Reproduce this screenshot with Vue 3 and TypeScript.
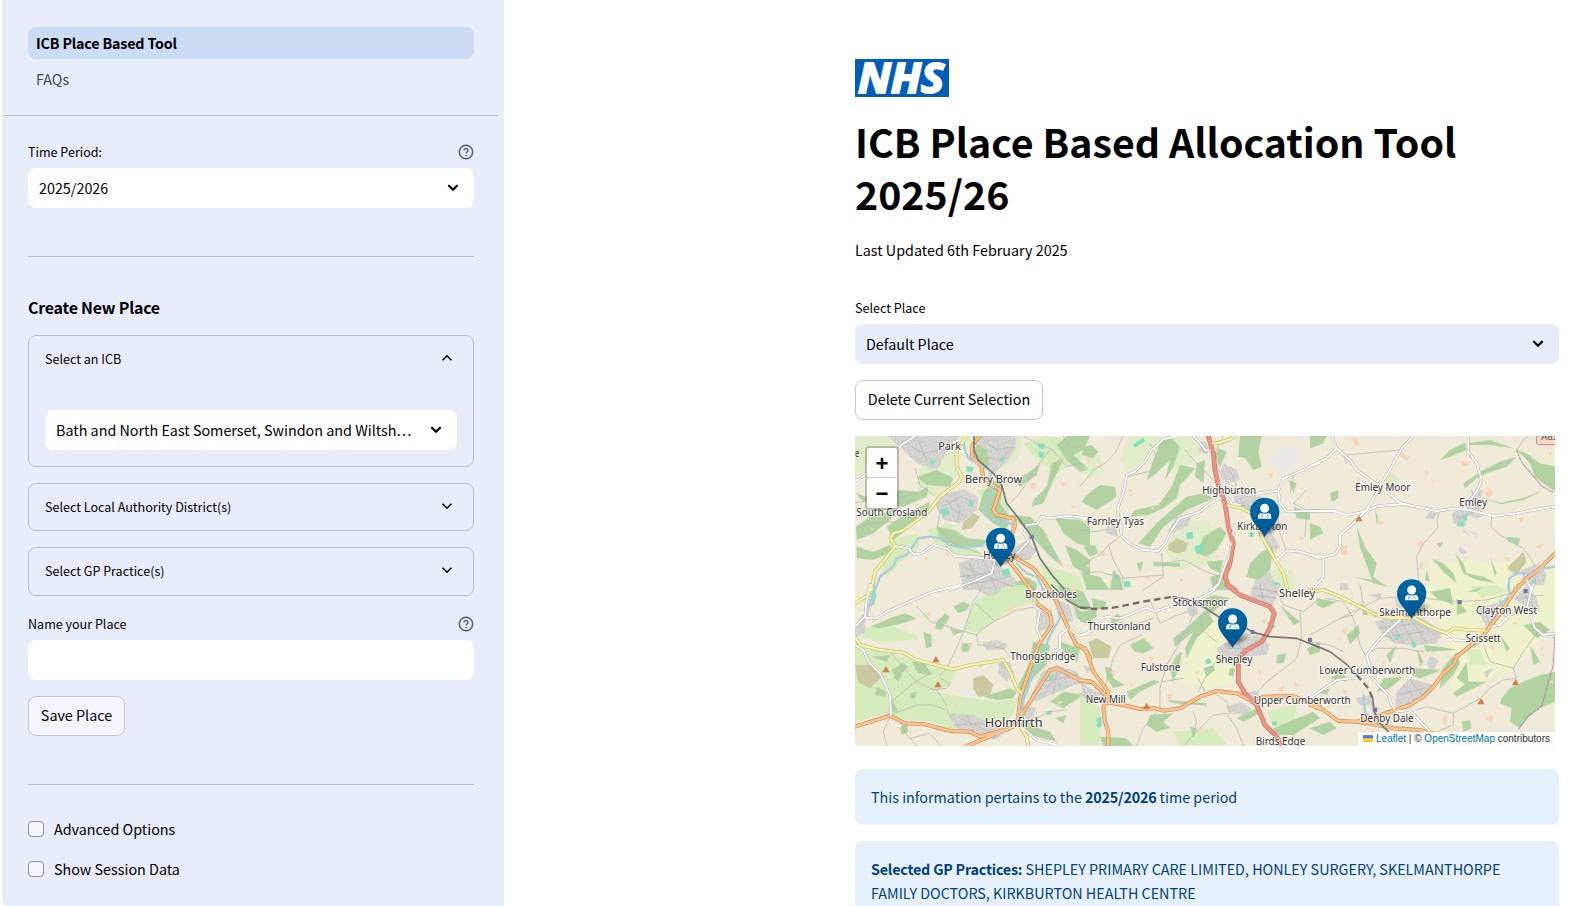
<script setup lang="ts">
import { ref } from 'vue'

type Kind = 'wood' | 'grass' | 'meadow' | 'town' | 'farm' | 'sport' | 'park' | 'heath' | 'pale'
interface Area { k: Kind; d: string }
interface Road { k: 'a' | 'b' | 'm' | 'w' | 'u' | 'river' | 'rail' | 'tunnel'; d: string }
interface Sheet { x: number; y: number; areas: Area[]; roads: Road[] }
interface Label { x: number; y: number; w: number; t: string; s?: number }

const period = ref('2025/2026')
const placeName = ref('')
const advanced = ref(false)
const session = ref(false)

// Map sheets are digitised at three units per pixel, each with its own origin.
const sheets: Sheet[] = [
  {
    x: -15, y: -18,
    areas: [
      { k: 'park', d: 'M15 18H75L60 60L45 120L15 150Z M330 18H520L500 90L440 120L400 110L360 70Z M210 110L310 60L330 130L260 200L200 190Z M60 18H110L150 60L140 110L80 120Z' },
      { k: 'grass', d: 'M520 40L590 18L660 30L700 80L620 130L560 90Z M230 300L300 280L360 330L400 380L340 390L260 350Z M120 330L200 310L210 350L160 390L110 440L90 400Z M380 180L440 170L480 230L470 290L420 260Z M570 400L690 440L700 480H590Z' },
      { k: 'town', d: 'M110 18H330L300 50L260 120L200 100L160 60Z M380 18H500L495 60L470 95L430 135L400 90Z M255 215L290 190L340 178L385 200L380 240L330 280L280 270Z M325 400L400 375L440 400L490 440L520 480H340Z M480 360L530 330L560 360L540 390L500 390Z M560 300L590 310L600 340L570 340Z' },
      { k: 'wood', d: 'M200 140L260 120L310 145L300 170L230 165Z M80 200L150 180L205 185L235 170L230 200L160 230L100 225Z M18 290L60 260L130 240L120 270L70 310L20 330Z M110 290L170 250L240 215L230 250L180 290L130 330Z M260 290L310 300L350 325L410 330L400 350L330 350L270 330Z M430 150L460 170L450 220L480 260L470 300L430 280L385 240L400 190Z M480 255L540 260L580 300L640 410L600 380L530 300Z M605 100L640 85L620 130L580 220L545 230L550 210L590 170Z M620 45L650 18L720 18L700 60L670 75L720 120L690 125L650 90Z M615 265L690 270L720 290V350L680 340L640 310Z M645 345L680 360L720 390V440L670 410Z M20 350L70 365L120 345L125 365L70 390L20 385Z M490 150L540 125L570 100L560 135L510 170Z M380 40L410 60L420 110L395 110L370 80Z M530 440L560 460L560 480H500L495 460Z M18 190L60 205L40 215Z' },
      { k: 'heath', d: 'M340 275L370 250L390 260L365 295L335 300Z' },
      { k: 'sport', d: 'M270 240L290 232L300 250L280 260Z M350 108L372 112L365 128L350 124Z M358 214L372 216L368 232L356 228Z M565 40L585 42L580 58L566 54Z M566 64L584 68L576 84L565 78Z M455 80L465 82L460 96L450 92Z M455 420L475 415L482 432L460 440Z M348 436L360 434L360 446L350 446Z M240 90L256 92L250 104L240 102Z' },
      { k: 'farm', d: 'M540 160L560 158L556 176L545 180Z M630 155L650 158L640 170Z M150 300L165 290L160 308Z M660 225L680 228L668 236Z M220 385L235 380L228 394Z M285 370L300 372L292 382Z M60 292L74 296L64 304Z M190 220L205 222L198 230Z' }
    ],
    roads: [
      { k: 'river', d: 'M340 30L345 60L355 85L380 100L420 120L430 180L405 230L410 260L440 270L480 280L490 290' },
      { k: 'river', d: 'M75 480L90 440L130 410L140 385L170 375L205 325L240 320L270 325L300 345L340 355L400 345' },
      { k: 'river', d: 'M500 400L530 430L560 440L580 480' },
      { k: 'u', d: 'M15 220L60 210L140 205L200 190 M255 215L270 250L262 290L310 340L390 370 M195 115L210 165L250 195 M600 60L560 110L530 160L500 200L470 230 M640 18L655 50L720 50 M15 295L60 280L130 275 M520 18L560 40L610 60L650 110L690 100 M290 210L310 240L350 260 M280 230L330 200L370 215 M310 190L330 250L320 275 M400 30L440 60L490 50 M410 80L450 90L480 60' },
      { k: 'u', d: 'M340 410L410 440L490 470 M360 400L390 480 M400 390L440 480 M330 440L450 425 M350 465L480 440 M150 30L220 70L300 55 M200 20L230 90' },
      { k: 'w', d: 'M15 155L60 125L120 90L155 45L195 18' },
      { k: 'w', d: 'M135 348L175 355L190 372L215 370L250 345L290 355L315 378L400 384L440 375L430 410L425 430L380 450L340 465L300 480' },
      { k: 'w', d: 'M435 368L500 372L535 335L522 310L530 285L560 282L575 260L600 265L650 258L720 265' },
      { k: 'b', d: 'M350 18L320 60L320 110L335 140L325 158L270 200L235 245L160 300L130 310L122 325L135 350L95 400L75 425L65 480' },
      { k: 'a', d: 'M390 18L368 45L365 80L395 110L400 145L450 180L440 210L430 240L440 255L490 265L495 285L480 330L470 370L455 400' },
      { k: 'a', d: 'M475 390L510 435L545 480' },
      { k: 'a', d: 'M470 350L500 385L550 415L580 450L600 480' },
      { k: 'rail', d: 'M372 18V60L385 90L430 130L455 165L470 220L510 270L545 320L570 385L610 440L645 480' }
    ]
  },
  {
    x: 675, y: -18,
    areas: [
      { k: 'park', d: 'M150 18H240L210 80L150 120L120 90Z M270 18H350L370 60L320 110L280 120Z M300 280L380 270L430 330L390 400L300 420L250 360Z M15 100L60 70L70 130L20 150Z M560 420H640V480H570Z' },
      { k: 'town', d: 'M430 100L470 120L480 150L440 160L420 130Z M460 200L510 190L570 210L600 245L530 255L470 235Z M535 255L570 300L600 350L570 380L545 330Z M530 430L570 425L590 480H520Z M290 260L340 250L320 290L275 310L265 300Z M75 300L105 280L115 320L80 310Z M370 30L390 50L380 75L355 60Z' },
      { k: 'pale', d: 'M585 60L640 40L655 80L645 110L605 130L565 95Z' },
      { k: 'wood', d: 'M240 40L270 18L300 50L280 110L255 150L270 90L230 130L200 150L220 90Z M300 105L345 115L320 145L300 165L290 205L250 235L205 255L150 260L165 240L235 225L275 170Z M20 195L60 165L105 170L110 200L65 230L50 240L5 215Z M10 55L35 45L55 65L40 85L5 75Z M350 100L375 90L370 160L345 140Z M480 18H545L535 65L545 110L520 120L495 85L475 80Z M415 55L440 65L420 110L405 80Z M320 200L370 190L400 205L320 240L250 290L210 350L175 340L230 280Z M370 320L420 290L440 310L410 360L380 380L350 370Z M510 400L540 370L580 345L570 420L535 450L500 440Z M10 350L45 345L55 370L30 380Z M100 420L120 440L130 480H90Z M5 430L60 440L90 480H20Z M220 395L300 400L300 410L220 408Z M380 395L430 390L420 430L390 415Z M625 150L650 160L640 190Z M640 230L690 250L690 270L650 265Z M390 440L430 430L450 480H400Z M170 400L190 395L180 430Z' },
      { k: 'heath', d: 'M265 345L290 325L325 340L315 365L290 370L265 360Z' },
      { k: 'sport', d: 'M158 45L190 22L195 35L165 52Z M318 308L338 305L340 325L322 328Z M342 350L370 340L372 365L350 372Z M508 306L522 308L520 322L508 320Z M580 455L600 458L600 472L578 470Z M130 455L150 452L152 470L132 472Z' },
      { k: 'farm', d: 'M15 85L30 80L28 100Z M145 175L160 180L148 190Z M60 365L75 362L74 378L62 378Z M18 405L30 402L26 415Z M560 130L580 128L575 145Z M680 200L690 195L692 215Z M655 315L672 325L660 330Z M300 445L315 450L300 455Z M190 445L210 440L205 450Z M210 230L225 225L220 240Z M405 375L420 380L410 385Z M150 190L160 195L150 200Z' }
    ],
    roads: [
      { k: 'u', d: 'M0 170L40 120L75 100L105 70L130 18 M0 300L40 305L75 300L120 255 M120 320L85 345L65 370L0 410 M85 345L100 390L130 445L120 480 M245 370L250 440L190 480 M250 400L310 390L380 425L420 440 M0 430L60 425L125 445L250 435 M210 40L240 100L205 125L140 140 M430 18L400 80L430 150 M480 205L500 240L550 220 M475 225L590 235 M620 365L600 310L590 240 M680 180L640 220L680 240L675 320 M640 140L630 190 M450 120L470 170L455 190 M315 60L350 100L380 130L420 170' },
      { k: 'w', d: 'M0 263L30 275' },
      { k: 'w', d: 'M340 18L365 45L375 60L390 62' },
      { k: 'w', d: 'M290 18L250 28L215 60L195 95L165 125L140 135L132 180L112 240L125 318L150 342L190 360L235 363L255 340L275 300L300 265L360 245L390 220L430 200' },
      { k: 'w', d: 'M410 155L450 168L500 195L595 182L610 145L670 120L720 98' },
      { k: 'w', d: 'M595 182L600 220L620 245L720 242' },
      { k: 'w', d: 'M435 190L455 220L480 225' },
      { k: 'w', d: 'M465 285L455 330L450 370L430 420L415 465L390 480' },
      { k: 'w', d: 'M590 390L620 362L660 365L720 385' },
      { k: 'b', d: 'M390 40L420 38L455 25L465 18' },
      { k: 'b', d: 'M440 225L485 235L525 255L545 320L580 380L610 430L622 480' },
      { k: 'm', d: 'M385 18L400 70L405 120L415 165L435 220L445 290L460 340L450 400L435 440L445 465L465 480' }
    ]
  },
  {
    x: 1365, y: -18,
    areas: [
      { k: 'meadow', d: 'M360 400L470 390L600 400L640 380L735 420V480H360Z' },
      { k: 'town', d: 'M425 250L480 225L500 170L520 185L505 215L525 255L500 265L475 255L465 290L430 280Z M360 245L385 250L370 268L345 265Z M635 420L680 400L710 430L700 480H640Z M455 300L500 310L500 325L465 310Z M90 460H115V480H90Z M450 350L470 365L460 375L445 362Z' },
      { k: 'grass', d: 'M220 150L245 130L270 145L250 162Z' },
      { k: 'wood', d: 'M0 18H50L40 40L0 55Z M390 90L420 60L465 38L470 60L420 80Z M465 45L480 38L540 30L610 55L540 45Z M620 60L650 70L690 100L735 110V185L700 160L675 140L660 100Z M460 160L520 120L570 95L620 80L590 110L530 130L500 145L465 175Z M60 190L85 180L85 205L65 215Z M195 240L205 265L200 285Z M140 290L165 350L200 400L190 440L230 470L190 460L175 420L150 350Z M365 385L400 400L430 430L440 460L400 425Z M435 370L460 400L470 430L520 440L560 460L500 450L460 430Z M590 320L630 325L625 345L595 335Z M380 340L400 335L390 355Z M0 280L30 290L40 310L0 330Z M500 195L570 219L640 204L700 180L640 211L570 223Z M240 470L130 440L190 450Z M540 380L560 430L555 440Z M350 420L360 455L345 450Z' },
      { k: 'heath', d: 'M590 415L640 365L650 395L620 435Z' },
      { k: 'farm', d: 'M120 25L140 25L145 45L135 50Z M270 65L300 80L290 92L272 80Z M450 95L470 90L476 105L460 112Z M530 170L550 185L540 205L525 195Z M200 265L225 278L205 285Z M92 350L112 345L112 375L95 375Z M320 340L335 330L340 345L325 355Z M330 395L340 398L338 418L328 415Z M365 150L375 150L370 165Z M678 345L700 343L690 358Z M625 265L640 262L635 285Z M715 70L728 65L718 85Z M580 380L600 385L590 395Z M345 120L355 125L350 138Z M475 80L485 75L485 90Z' },
      { k: 'sport', d: 'M455 258L470 255L472 270L458 272Z M440 275L465 278L460 290L442 288Z M668 450L678 448L678 460L668 460Z' },
      { k: 'pale', d: 'M460 300L500 315L495 325Z M120 275L145 280L140 300Z M720 320L735 318V335L722 335Z' }
    ],
    roads: [
      { k: 'river', d: 'M595 480L598 445L620 430L670 430L700 415L735 410' },
      { k: 'u', d: 'M85 60L110 75L270 60 M390 245L380 275L385 290L360 320L340 340L320 380L328 480 M545 260L543 290L570 315L610 340L640 355L665 390L675 410 M440 270L500 240 M440 255L460 285 M485 180L500 240 M95 60L110 100 M620 60L640 30L655 18' },
      { k: 'w', d: 'M65 18L80 55L50 85L0 108' },
      { k: 'w', d: 'M80 55L120 90L140 120L190 155L235 190L275 222' },
      { k: 'w', d: 'M310 18L275 55L245 110L215 160L185 215L165 245L130 280L90 315L90 350L75 372L45 380L0 375' },
      { k: 'w', d: 'M40 380V440L10 475' },
      { k: 'w', d: 'M0 243L70 243L110 255L150 248L205 228L280 222L380 243L430 236L480 240L550 258L620 250L670 240L735 230' },
      { k: 'w', d: 'M475 18V65L500 100L515 150L500 185L480 210L460 240' },
      { k: 'w', d: 'M650 450L665 480' },
      { k: 'a', d: 'M740 365L690 415L650 445L615 480' }
    ]
  },
  {
    x: -15, y: 447,
    areas: [
      { k: 'grass', d: 'M15 160L60 190L110 200L250 245L320 255L300 300L250 320L300 330L440 350L500 340L490 390L420 430L290 430L240 410L130 400L100 390L15 410Z M375 50L430 15L500 0H540L550 50L480 75L430 110L385 145L340 135Z M20 130L130 125L200 150L200 165L80 170L20 150Z M215 80L240 90L230 110Z' },
      { k: 'town', d: 'M60 0L80 30L55 90L15 170V120L45 80Z M355 0H460L450 20L420 35L390 20Z M300 385L370 390L430 420L480 440L370 450L320 430Z M395 175L440 165L475 180L460 195L410 195Z M445 235L480 230L490 270L470 290L445 265Z M610 40L660 60L670 110L650 110L620 70Z M575 260L620 240L680 260L700 290L600 330L560 350L540 340Z M560 70L600 90L600 130L560 140Z M15 120H45L50 145L15 150Z M510 360L560 370L540 420L500 420Z' },
      { k: 'wood', d: 'M310 65L340 50L360 60L350 75L325 85Z M260 110L285 85L300 95L275 135L255 130Z M60 125L130 95L165 85L200 100L160 115L90 130Z M220 140L245 150L245 185L228 190Z M335 175L365 175L355 200L335 200Z M125 255L160 235L175 245L140 280Z M185 230L225 235L245 270L205 265Z M130 275L160 265L145 290Z M80 305L110 320L105 335L75 330Z M180 325L200 320L195 340L182 340Z M400 335L480 310L500 320L490 340L440 345Z M550 170L600 180L590 240L540 290L510 370L505 300L535 240Z M620 0L700 20L720 60V80L640 40Z M670 60L720 100V120L680 100Z M600 350L640 320L700 330L640 370Z M150 430L170 410L175 440L155 450Z M125 340L145 380L125 380Z M615 400L650 390L640 415Z M500 410L600 440L620 470L540 450Z M630 170L690 190L680 230L640 200Z M65 215L120 210L110 230Z M300 130L340 140L310 150Z' },
      { k: 'heath', d: 'M370 280L400 270L430 300L420 330L385 335L370 315Z M15 240L70 240L100 270L60 310L25 290Z' },
      { k: 'pale', d: 'M320 310L375 315L375 335L330 330Z' },
      { k: 'sport', d: 'M585 380L605 375L605 388L592 390Z M595 272L610 270L610 282L598 284Z M620 290L635 300L630 310Z M65 20L80 30L72 60L62 60Z M510 310L530 320L520 350Z' },
      { k: 'farm', d: 'M230 85L245 80L240 95Z M470 75L500 60L490 80Z M540 400L560 395L560 415Z M350 175L370 180L365 190Z M310 360L325 355L320 370Z M440 450L455 455L440 462Z M175 440L185 435L185 450Z M240 130L250 135L240 140Z M620 350L640 348L630 360Z M380 240L400 235L395 250Z M660 10L680 12L670 30Z' }
    ],
    roads: [
      { k: 'river', d: 'M70 0L75 30L60 60 M620 60L630 100L600 150L570 230L540 290L520 350L510 400 M470 435L430 460' },
      { k: 'u', d: 'M400 0L370 50L345 130L310 210L290 250L270 270 M200 65L225 90L240 110L310 130L380 150 M380 150L400 130L430 110L500 75L560 65 M380 150L385 180L460 190L480 215 M375 55L430 105 M125 205L165 255L200 290L240 310L260 315L290 360 M130 345L190 295L250 260 M120 390L200 360L250 360L290 375L310 410 M270 280L300 295L290 310L250 315 M120 395L100 440L110 480 M150 410L170 450L200 480 M450 240L490 260 M580 290L680 270 M590 310L640 250 M610 330L620 260 M330 400L420 440 M310 420L400 415 M350 390L370 440 M560 400L600 380L650 375 M180 460L240 445L270 480' },
      { k: 'w', d: 'M15 125L45 95L50 45L60 0' },
      { k: 'w', d: 'M45 98L80 100L110 80L180 50L250 20L330 0' },
      { k: 'w', d: 'M15 180L40 195L55 230L90 265L120 330L123 390' },
      { k: 'w', d: 'M545 20L555 65L570 75L560 130L575 165' },
      { k: 'w', d: 'M610 200L630 190V150L655 130L685 152L720 145' },
      { k: 'w', d: 'M520 430L560 465L620 480' },
      { k: 'b', d: 'M15 155L30 180L90 195L160 203L200 225L310 253L360 240L460 225L480 260L500 310L515 325' },
      { k: 'b', d: 'M510 425L530 455L535 483' },
      { k: 'b', d: 'M65 0L55 30L15 55' },
      { k: 'a', d: 'M15 425L120 392L165 415L225 418L300 438L360 440L390 455L480 430' },
      { k: 'a', d: 'M350 483L430 450L490 425L505 400L510 340L540 250L565 180L605 120L600 85L560 55L535 0' },
      { k: 'a', d: 'M505 405L540 350L600 255L620 250L690 285L720 290' },
      { k: 'a', d: 'M590 0L620 50L655 130L680 180L705 190L720 220' },
      { k: 'rail', d: 'M605 0L650 45L690 68L720 68' }
    ]
  },
  {
    x: 675, y: 447,
    areas: [
      { k: 'meadow', d: 'M340 120L410 90L440 170L470 240L450 300L380 310L300 290L330 180Z' },
      { k: 'grass', d: 'M10 200L90 195L60 220L20 220Z M280 440L400 430L440 480H300Z M0 330L60 370L60 480H0Z M560 380L650 360L640 430L580 420Z' },
      { k: 'town', d: 'M410 190L440 170L490 160L530 150L570 180L560 210L500 215L450 225L420 210Z M520 0H600L580 60L540 60L510 30Z M440 365L480 350L515 370L500 390L445 385Z M480 325L530 318L545 340L500 345Z M0 290L30 310L60 325L50 345L10 340Z M320 70L350 60L355 90L330 95Z M10 240L40 250L20 265Z' },
      { k: 'wood', d: 'M0 80L50 75L50 95L20 115L0 110Z M35 40L80 50L70 75L40 70Z M90 110L110 85L125 95L100 120Z M150 180L190 160L220 190L190 205L165 200Z M280 160L320 130L370 80L400 60L390 90L400 110L350 160L320 220L315 190L340 140L285 185Z M340 60L400 30L450 40L400 80Z M75 245L95 250L100 280L135 300L100 310L80 280Z M140 320L220 285L240 290L180 320L150 345Z M270 250L290 210L305 200L300 240L280 290Z M210 390L280 385L250 410L270 430L230 440L200 420Z M370 250L400 240L405 255L380 275Z M590 210L620 205L610 235L590 235Z M470 400L530 370L540 385L490 410Z M580 430L700 380L720 400L640 450L590 450Z M260 345L380 355L380 362L280 355Z M60 455L140 460L160 483H70Z M450 250L465 250L460 275L445 270Z M560 110L590 125L570 130Z M600 60L660 110L640 120Z M330 425L350 430L340 460Z M680 190L720 170V200L690 210Z' },
      { k: 'heath', d: 'M25 170L50 160L95 185L85 220L40 220Z' },
      { k: 'sport', d: 'M375 225L390 220L395 235L378 238Z M575 412L590 408L592 420L578 422Z M50 400L65 395L65 425L52 430Z' },
      { k: 'farm', d: 'M205 215L225 220L215 230Z M170 70L185 75L175 85Z M260 330L280 325L270 345Z M360 425L372 430L362 440Z M545 110L560 95L555 118Z M345 260L360 255L350 270Z M595 310L615 300L605 325Z M530 250L545 260L540 275Z M90 260L105 255L100 270Z M480 95L500 100L490 115Z M680 5L700 10L690 25Z M150 295L160 300L150 310Z M640 290L655 300L645 310Z' }
    ],
    roads: [
      { k: 'u', d: 'M210 45L240 115L280 95L340 75 M185 150L120 180L100 220L80 290L60 330 M110 110L160 120L220 100 M360 95L370 140L410 170 M345 80L290 190L260 240L240 310L240 370 M420 210L375 280L355 320 M355 280L375 320 M450 380L440 350L400 320 M230 380L190 430L170 483 M440 385L400 390L350 440L310 483 M440 385L470 430L490 483 M250 290L310 280 M470 170L500 210 M440 190L500 190 M660 75L665 160L650 220L600 260L560 290L530 325 M590 20L610 60L670 80L720 40 M520 10L590 20 M520 30L590 40 M540 0L550 55 M0 325L50 340 M340 380L350 410L340 440' },
      { k: 'w', d: 'M0 152L20 145L50 110L80 95L120 100L200 68L225 80L280 60L360 40L400 18L410 0' },
      { k: 'a', d: 'M0 182L20 200L40 260L85 320L80 345L70 370L75 410L85 440V483' },
      { k: 'a', d: 'M0 288L35 290L80 335' },
      { k: 'a', d: 'M80 352L130 360L180 372L225 370L250 377L300 370L360 335L410 318L470 325L520 350' },
      { k: 'a', d: 'M515 350L550 335L640 333L720 365' },
      { k: 'm', d: 'M440 0L480 30L530 50L570 65L583 85L570 130L545 170L500 195L475 220L475 290L495 325L530 360L555 420L590 455L605 483' },
      { k: 'rail', d: 'M280 35L330 45L370 65L430 105L480 120L520 142L570 155L650 160L720 188' },
      { k: 'tunnel', d: 'M0 68L40 72L100 68L200 48L280 35' }
    ]
  },
  {
    x: 1365, y: 447,
    areas: [
      { k: 'meadow', d: 'M350 0H735V130L650 200L600 260L500 300L440 340L420 300L450 230L400 190L430 150L340 80Z' },
      { k: 'grass', d: 'M470 190L510 195L530 240L480 240Z M400 240L450 210L420 270L390 300Z M480 5L560 0L590 20L520 40Z' },
      { k: 'town', d: 'M195 110L250 95L330 95L400 140L380 175L310 180L250 175L215 145Z M260 320L300 280L370 300L350 335L290 370L255 360Z M500 70L560 55L600 60L570 100L530 130Z M610 40L650 0L680 40L690 80L640 60Z M135 340L180 330L190 360L150 360Z M360 210L385 225L370 260L350 240Z M175 30L215 25L210 45Z M520 260L550 250L530 280Z M180 350L210 370L190 400Z M480 160L520 170L490 190Z M255 40L290 45L290 70L260 70Z' },
      { k: 'wood', d: 'M575 340L600 310L640 290L690 270L735 260V350L690 370L655 395L630 430L600 410L605 370L570 355Z M395 255L440 200L450 235L430 270L390 310Z M440 280L470 230L475 290L530 290L500 305L440 335L430 325L465 298Z M220 280L280 275L240 310L200 320Z M310 250L395 255L330 280L305 270Z M110 150L145 120L150 145L120 180Z M340 180L420 190L440 195L350 200Z M20 40L80 50L40 70L20 60Z M360 20L420 10L430 60L380 40Z M455 410L480 405L485 430L460 440Z M0 430L60 410L80 430L40 450Z M470 20L520 5L500 20Z M150 50L175 90L160 90Z M440 40L470 80L440 90Z M640 120L690 110L720 135L680 160Z M230 210L260 180L240 235Z M320 190L340 230L330 245Z M60 280L100 260L110 290Z M20 320L60 310L50 330Z M570 150L600 190L590 200Z M660 180L690 230L670 240Z' },
      { k: 'sport', d: 'M255 152L268 148L270 162L258 165Z M302 175L315 170L320 185L308 190Z M565 50L575 40L570 60Z' },
      { k: 'farm', d: 'M95 135L115 130L105 150Z M85 160L95 155L90 170Z M400 395L412 390L410 420L400 420Z M525 400L550 390L545 415Z M610 110L625 115L612 120Z M690 190L705 185L695 200Z M95 310L115 320L100 325Z M540 185L555 180L550 195Z M115 20L125 15L130 30Z M30 190L45 185L40 200Z M430 210L440 220L432 225Z M715 290L728 285L730 298Z M215 230L225 225L220 240Z M180 430L200 440L185 450Z' }
    ],
    roads: [
      { k: 'river', d: 'M595 0L600 30L570 60 M160 330L165 380L180 400' },
      { k: 'u', d: 'M50 40L100 50L130 100L150 180L165 210 M0 150L110 90L180 55L210 40L280 35L450 50L530 45L620 20 M165 210L200 190L280 190L340 200 M520 180L540 230L610 250L640 200L690 130L735 160 M610 250L620 280L580 285L540 310L510 340L430 385L350 365L320 375 M430 385V420L380 440 M0 170L60 180L100 200 M150 0L160 60L130 90L90 100 M340 80L345 30 M620 40L700 30' },
      { k: 'u', d: 'M215 110L250 170 M240 100L280 175 M270 97L310 175 M300 97L350 175 M205 130L320 115L380 150 M225 155L340 140 M260 330L340 310 M280 300L320 350 M300 285L340 335 M560 60L590 100 M510 90L590 75 M640 20L670 70' },
      { k: 'w', d: 'M0 340L50 305L80 285L170 275L185 265L170 210L190 185L220 150L270 105' },
      { k: 'w', d: 'M180 270L210 305L235 330L245 360L260 380L300 375L330 410L360 440' },
      { k: 'w', d: 'M410 145L435 165L475 168L500 165' },
      { k: 'w', d: 'M540 125L570 120L600 90L650 70' },
      { k: 'w', d: 'M655 75L675 130L700 150L735 145' },
      { k: 'w', d: 'M650 70L660 30L670 0' },
      { k: 'b', d: 'M0 20L40 15L90 35L150 65L200 90L240 100L310 98L360 125L410 145L430 130L480 135L530 137' },
      { k: 'a', d: 'M0 360L40 375L85 408L140 410L190 398L240 380L300 360L340 335L370 305L400 265L430 240L440 215L490 175L520 150L570 85L620 10L630 0' },
      { k: 'a', d: 'M140 410L190 418L250 430L330 435L370 445' },
      { k: 'rail', d: 'M0 175L60 200L110 238L140 270' },
      { k: 'tunnel', d: 'M140 270L175 310L188 340' },
      { k: 'rail', d: 'M188 340L192 375L205 410L235 440' }
    ]
  }
]

const labels: Label[] = [
  { x: 0, y: 63, w: 13, t: 'e' }, { x: 250, y: 42, w: 68, t: 'Park' }, { x: 330, y: 140, w: 171, t: 'Berry Brow' },
  { x: 4, y: 239, w: 213, t: 'South Crosland' }, { x: 385, y: 370, w: 97, t: 'Honley' },
  { x: 695, y: 267, w: 172, t: 'Farnley Tyas' }, { x: 1042, y: 175, w: 161, t: 'Highburton' },
  { x: 1147, y: 282, w: 150, t: 'Kirkburton' }, { x: 1501, y: 165, w: 165, t: 'Emley Moor' },
  { x: 1813, y: 209, w: 83, t: 'Emley' }, { x: 511, y: 485, w: 155, t: 'Brockholes' },
  { x: 466, y: 672, w: 195, t: 'Thongsbridge' }, { x: 389, y: 874, w: 174, t: 'Holmfirth', s: 39 },
  { x: 953, y: 509, w: 165, t: 'Stocksmoor' }, { x: 698, y: 583, w: 188, t: 'Thurstonland' },
  { x: 857, y: 706, w: 119, t: 'Fulstone' }, { x: 1082, y: 682, w: 110, t: 'Shepley' },
  { x: 692, y: 801, w: 120, t: 'New Mill' }, { x: 1196, y: 804, w: 291, t: 'Upper Cumberworth' },
  { x: 1202, y: 926, w: 149, t: 'Birds Edge' }, { x: 1272, y: 482, w: 108, t: 'Shelley' },
  { x: 1573, y: 541, w: 215, t: 'Skelmanthorpe' }, { x: 1863, y: 533, w: 183, t: 'Clayton West' },
  { x: 1832, y: 617, w: 105, t: 'Scissett' }, { x: 1393, y: 714, w: 288, t: 'Lower Cumberworth' },
  { x: 1516, y: 859, w: 160, t: 'Denby Dale' }
]

const peaks = [[93, 690], [243, 660], [249, 735], [875, 800], [1512, 237], [1878, 786], [1982, 729]]
const stations = [[530, 303], [1193, 588], [1365, 612], [1814, 498], [2012, 465], [1560, 822]]
const pins = [[437, 394], [1229, 304], [1133, 636], [1670, 549]]
</script>

<template>
  <div class="page">
    <aside class="sidebar">
      <nav>
        <a class="nav-item active">ICB Place Based Tool</a>
        <a class="nav-item">FAQs</a>
      </nav>
      <hr class="wide">
      <div class="field-label first">
        <span>Time Period:</span>
        <svg class="help" viewBox="0 0 16 16"><circle cx="8" cy="8" r="6.7" /><path d="M6 6.5a2 2 0 1 1 3 1.7c-.7.4-1 .7-1 1.4M8 11v1.2" /></svg>
      </div>
      <div class="select">
        <span>{{ period }}</span>
        <svg class="chev bold" viewBox="0 0 12 8"><path d="M2 1.7 6 5.7 10 1.7" /></svg>
      </div>
      <hr class="section">
      <h3>Create New Place</h3>
      <section class="expander open">
        <div class="summary">
          <span>Select an ICB</span>
          <svg class="chev" viewBox="0 0 12 8"><path d="M1.6 6.2 6 1.8 10.4 6.2" /></svg>
        </div>
        <div class="select inner">
          <span>Bath and North East Somerset, Swindon and Wiltsh…</span>
          <svg class="chev bold" viewBox="0 0 12 8"><path d="M2 1.7 6 5.7 10 1.7" /></svg>
        </div>
      </section>
      <section class="expander">
        <div class="summary">
          <span>Select Local Authority District(s)</span>
          <svg class="chev" viewBox="0 0 12 8"><path d="M1.6 1.8 6 6.2 10.4 1.8" /></svg>
        </div>
      </section>
      <section class="expander last">
        <div class="summary">
          <span>Select GP Practice(s)</span>
          <svg class="chev" viewBox="0 0 12 8"><path d="M1.6 1.8 6 6.2 10.4 1.8" /></svg>
        </div>
      </section>
      <div class="field-label">
        <span>Name your Place</span>
        <svg class="help" viewBox="0 0 16 16"><circle cx="8" cy="8" r="6.7" /><path d="M6 6.5a2 2 0 1 1 3 1.7c-.7.4-1 .7-1 1.4M8 11v1.2" /></svg>
      </div>
      <input v-model="placeName" class="name-input" type="text">
      <button class="btn save">Save Place</button>
      <hr class="section">
      <label class="check"><input v-model="advanced" type="checkbox"><span>Advanced Options</span></label>
      <label class="check"><input v-model="session" type="checkbox"><span>Show Session Data</span></label>
    </aside>

    <main>
      <svg class="logo" viewBox="0 0 94 38">
        <rect width="94" height="38" fill="#005eb8" />
        <text x="3" y="33.8" textLength="86" lengthAdjust="spacingAndGlyphs">NHS</text>
      </svg>
      <h1>ICB Place Based Allocation Tool<br>2025/26</h1>
      <p class="updated">Last Updated 6th February 2025</p>
      <div class="field-label place">Select Place</div>
      <div class="select tinted">
        <span>Default Place</span>
        <svg class="chev bold" viewBox="0 0 12 8"><path d="M2 1.7 6 5.7 10 1.7" /></svg>
      </div>
      <button class="btn delete">Delete Current Selection</button>

      <div class="map">
        <svg class="tiles" viewBox="0 0 2100 930">
          <defs>
            <radialGradient id="shade"><stop offset="0" stop-opacity=".5" /><stop offset="1" stop-opacity="0" /></radialGradient>
            <linearGradient id="pin" x2="0" y2="1"><stop offset="0" stop-color="#0068a5" /><stop offset="1" stop-color="#005590" /></linearGradient>
            <pattern id="streets" width="26" height="22" patternUnits="userSpaceOnUse" patternTransform="rotate(-18)">
              <rect width="26" height="22" fill="#d8d7d4" />
              <path d="M0 5H26M7 5V22M19 0V5M19 14V22M7 14H26" fill="none" stroke="#c3c2bf" stroke-width="1.8" />
            </pattern>
          </defs>
          <rect width="2100" height="930" fill="#f0ebd8" />
          <g v-for="(s, i) in sheets" :key="'a' + i" :transform="`translate(${s.x} ${s.y})`">
            <path v-for="(a, j) in s.areas" :key="j" :class="['area', a.k]" :d="a.d" />
          </g>
          <g v-for="(s, i) in sheets" :key="'c' + i" :transform="`translate(${s.x} ${s.y})`">
            <path v-for="(r, j) in s.roads" :key="j" :class="['casing', r.k]" :d="r.d" />
          </g>
          <g v-for="(s, i) in sheets" :key="'r' + i" :transform="`translate(${s.x} ${s.y})`">
            <path v-for="(r, j) in s.roads" :key="j" :class="['road', r.k]" :d="r.d" />
          </g>
          <path class="boundary" d="M2100 597L2094 690L2060 810L2020 840L1990 880 M1985 42L2000 80L2035 120L2060 150L2095 170" />
          <rect v-for="(p, i) in stations" :key="'s' + i" class="station" :x="p[0] - 6" :y="p[1] - 6" width="12" height="12" />
          <path v-for="(p, i) in peaks" :key="'p' + i" class="peak" :d="`M${p[0]} ${p[1]}l11 19h-22z`" />
          <rect x="2045" y="-25" width="90" height="51" rx="6" fill="#f5d6cb" stroke="#c98a7c" stroke-width="3" />
          <text class="shield" x="2059" y="12">A63</text>
          <text v-for="l in labels" :key="l.t" class="place-name" :x="l.x" :y="l.y" :textLength="l.w" :font-size="l.s ?? 32" lengthAdjust="spacingAndGlyphs">{{ l.t }}</text>
          <g v-for="(p, i) in pins" :key="'m' + i" :transform="`translate(${p[0]} ${p[1]})`">
            <ellipse cx="24" cy="-16" rx="46" ry="17" fill="url(#shade)" transform="rotate(-24)" />
            <path d="M0 0C-9 -22 -44 -46 -44 -76A44 43 0 0 1 44 -76C44 -46 9 -22 0 0Z" fill="url(#pin)" />
            <circle cx="0" cy="-87" r="13.5" fill="#fff" />
            <path d="M-20 -56V-61Q-20 -73 -8 -73Q0 -68 8 -73Q20 -73 20 -61V-56Z" fill="#fff" />
            <path d="M-8 -73V-66M8 -73V-67M4 -59V-62Q8 -69 12 -62V-59" fill="none" stroke="#4a8fbb" stroke-width="2" />
            <circle cx="-8" cy="-63" r="3" fill="none" stroke="#4a8fbb" stroke-width="2" />
          </g>
        </svg>
        <div class="zoom"><span>+</span><span>−</span></div>
        <div class="attribution">
          <svg viewBox="0 0 12 8"><path fill="#4C7BE1" d="M0 0h12v4H0z" /><path fill="#FFD500" d="M0 4h12v3H0z" /><path fill="#E0BC00" d="M0 7h12v1H0z" /></svg>
          <a>Leaflet</a> | © <a>OpenStreetMap</a> contributors
        </div>
      </div>

      <div class="info">This information pertains to the <b>{{ period }}</b> time period</div>
      <div class="info second"><b>Selected GP Practices:</b> SHEPLEY PRIMARY CARE LIMITED, HONLEY SURGERY, SKELMANTHORPE<br>FAMILY DOCTORS, KIRKBURTON HEALTH CENTRE</div>
    </main>
  </div>
</template>

<style>
html, body { overflow: hidden; }
</style>

<style scoped>
.page {
  display: flex;
  width: 1584px;
  height: 906px;
  overflow: hidden;
  background: #fff;
  color: #000;
  font-family: "Noto Sans CJK SC", "Noto Sans", sans-serif;
  font-size: 14.33px;
  line-height: 24px;
}
.page * { box-sizing: border-box; }
.sidebar {
  flex: none;
  width: 501px;
  height: 906px;
  margin-left: 3px;
  padding: 27px 30px 0 24px;
  border-left: 1px solid #dfe1e8;
  border-bottom-left-radius: 6px;
  background: #e7edf9;
}
nav { display: flex; flex-direction: column; gap: 4px; }
.nav-item { height: 32px; padding: 0 8px; border-radius: 8px; line-height: 32px; color: #44484f; }
.nav-item.active { background: #cbdcf3; color: #000; font-weight: 600; letter-spacing: -.19px; }
hr { height: 1px; margin: 0; border: 0; background: #b9bdc7; }
.wide { margin: 20px -24px 24px; }
.section { margin-top: 48px; }
.field-label {
  display: flex;
  align-items: center;
  justify-content: space-between;
  height: 24px;
  margin: 16px 0 4px;
  font-size: 12.55px;
}
.field-label.first { margin-top: 0; }
.help { width: 16px; height: 16px; fill: none; stroke: #5c6068; stroke-width: 1.5; }
.select {
  display: flex;
  align-items: center;
  justify-content: space-between;
  height: 40px;
  padding: 0 15px 0 11px;
  border-radius: 8px;
  background: #fff;
  white-space: nowrap;
}
.chev { flex: none; width: 12px; height: 8px; margin-top: -2px; fill: none; stroke: #000; stroke-width: 1.6; }
.chev.bold { margin-top: 0; stroke-width: 2.2; stroke-linecap: round; }
h3 { height: 30px; margin: 36px 0 12px; font-size: 15.95px; font-weight: 600; line-height: 28px; letter-spacing: -.22px; }
.expander { height: 48px; margin-bottom: 16px; padding: 0 16px; border: 1px solid #b9bdc7; border-radius: 8px; font-size: 12.55px; }
.expander.open { height: 132px; }
.expander.last { height: 49px; }
.summary { display: flex; align-items: center; justify-content: space-between; height: 46px; padding-right: 4px; }
.inner { margin-top: 28px; font-size: 14.33px; }
.name-input { display: block; width: 100%; height: 40px; padding: 0 11px; border: 0; border-radius: 8px; background: #fff; font: inherit; }
.btn { display: block; height: 40px; margin-top: 16px; padding: 0 0 2px; border: 1px solid #c8c9cc; border-radius: 8px; font: inherit; color: #000; }
.save { width: 97px; background: #f3f6fd; }
.delete { width: 188px; background: #fff; }
.check { display: flex; align-items: center; gap: 10px; height: 16px; margin-top: 24px; }
.section + .check { margin-top: 36px; }
.check input { appearance: none; width: 16px; height: 16px; margin: 0; border: 1px solid #8c9099; border-radius: 4px; background: #f3f6fd; }
main { width: 704px; margin-left: 351px; padding-top: 59px; }
.logo { display: block; width: 94px; height: 38px; }
.logo text { fill: #fff; stroke: #fff; stroke-width: 2; font: italic bold 41.5px "Noto Sans", sans-serif; }
h1 { height: 104px; margin: 18px 0 0; font-size: 39.3px; font-weight: 700; line-height: 52px; white-space: nowrap; }
.updated { margin: 19px 0 0; }
.place { margin-top: 34px; }
.tinted { background: #e7edf9; }
.map { position: relative; width: 700px; height: 310px; margin-top: 16px; overflow: hidden; }
.tiles { display: block; width: 700px; height: 310px; }
.wood { fill: #b0d3a1; }
.grass { fill: #d2ecb8; opacity: .85; }
.meadow { fill: #eff2cd; }
.park { fill: #d9ecc2; opacity: .65; }
.town { fill: url(#streets); }
.farm { fill: #f8d4b8; }
.sport { fill: #88dfbe; }
.heath { fill: #c9caa0; }
.pale { fill: #ebe9e5; }
.casing, .road, .boundary { fill: none; stroke-linejoin: round; stroke-linecap: round; }
.casing.a { stroke: #c98d55; stroke-width: 12; }
.casing.b { stroke: #b7b878; stroke-width: 11; }
.casing.m { stroke: #c87568; stroke-width: 14; }
.casing.w { stroke: #aeaeaa; stroke-width: 8.5; }
.casing.u { stroke: #b7b7b2; stroke-width: 2.4; }
.casing.river, .road.river { stroke: #a9cfdc; stroke-width: 6; }
.casing.rail, .casing.tunnel { stroke: none; }
.road.a { stroke: #fac38d; stroke-width: 8; }
.road.b { stroke: #f5f3a8; stroke-width: 7.5; }
.road.m { stroke: #ea9484; stroke-width: 10; }
.road.w { stroke: #fff; stroke-width: 5.5; }
.road.u { stroke: none; }
.road.rail { stroke: #777; stroke-width: 5; }
.road.tunnel { stroke: #6d6d6d; stroke-width: 7; stroke-dasharray: 20 12; stroke-linecap: butt; }
.boundary { stroke: #9f879f; stroke-width: 4; stroke-dasharray: 10 5 3 5; opacity: .7; }
.station { fill: #7375aa; }
.peak { fill: #cf814b; }
.place-name { fill: #333; stroke: rgba(255, 255, 255, .75); stroke-width: 6; stroke-linejoin: round; paint-order: stroke; font-family: "Noto Sans", sans-serif; }
.shield { fill: #6b3b32; font: 28px "Noto Sans", sans-serif; }
.zoom {
  position: absolute;
  top: 10px;
  left: 10px;
  width: 34px;
  height: 64px;
  border: 2px solid rgba(0, 0, 0, .2);
  border-radius: 4px;
  background: #fff;
  background-clip: padding-box;
  font: bold 22px/32px "Liberation Sans", sans-serif;
  text-align: center;
}
.zoom span { display: block; height: 30px; }
.zoom span:first-child { border-bottom: 1px solid #ccc; }
.attribution {
  position: absolute;
  right: 0;
  bottom: 0;
  padding: 0 5px;
  background: rgba(255, 255, 255, .8);
  color: #333;
  font: 10px/14px "Liberation Sans", Arial, sans-serif;
  white-space: nowrap;
}
.attribution svg { width: 10px; height: 7px; margin-right: 3px; }
.attribution a { color: #0078a8; }
.info { height: 56px; margin-top: 23px; padding: 16px; border-radius: 8px; background: #e6f1fc; color: #004280; white-space: nowrap; }
.info b { font-weight: 600; letter-spacing: -.21px; }
.info.second { height: 80px; margin-top: 16px; }
</style>
